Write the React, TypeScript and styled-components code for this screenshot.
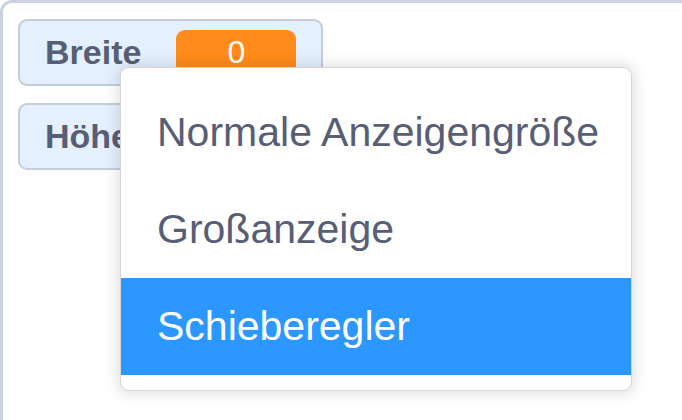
import React from 'react';
import styled, { createGlobalStyle } from 'styled-components';

const GlobalStyle = createGlobalStyle`
  html, body {
    margin: 0;
    padding: 0;
    width: 682px;
    height: 420px;
    overflow: hidden;
    background: #ffffff;
  }
  body {
    font-family: "Liberation Sans", Arial, Helvetica, sans-serif;
  }
`;

const Root = styled.div`
  position: relative;
  width: 682px;
  height: 420px;
  overflow: hidden;
`;

const Stage = styled.div`
  box-sizing: border-box;
  width: 720px;
  height: 460px;
  border: 3px solid #c9d2de;
  border-top-left-radius: 12px;
  background: #ffffff;
  padding: 16px 0 0 15px;
  display: flex;
  flex-direction: column;
  align-items: flex-start;
  gap: 17px;
`;

const Monitor = styled.div`
  box-sizing: border-box;
  height: 67px;
  display: flex;
  align-items: center;
  gap: 35px;
  padding: 0 25px 0 25px;
  background: #e5f0ff;
  border: 2px solid #c4cedb;
  border-radius: 9px;
`;

const Label = styled.span`
  font-size: 34px;
  font-weight: 700;
  color: #575e75;
  white-space: nowrap;
`;

const Value = styled.span`
  box-sizing: border-box;
  min-width: 120px;
  height: 45px;
  display: flex;
  align-items: center;
  justify-content: center;
  background: #ff8c1a;
  border-radius: 9px;
  color: #ffffff;
  font-size: 32px;
`;

const Menu = styled.ul`
  position: absolute;
  left: 120px;
  top: 67px;
  box-sizing: border-box;
  width: 512px;
  margin: 0;
  padding: 16px 0 15px;
  list-style: none;
  background: #ffffff;
  border: 1px solid #d6d6d6;
  border-radius: 9px;
  box-shadow: 0 0 14px 3px rgba(0, 0, 0, 0.12);
`;

const Item = styled.li<{ $active?: boolean }>`
  height: 97px;
  display: flex;
  align-items: center;
  padding-left: 36px;
  font-size: 41px;
  color: ${(p) => (p.$active ? '#ffffff' : '#575e75')};
  background: ${(p) => (p.$active ? '#2b97ff' : 'transparent')};
  white-space: nowrap;
`;

const monitors = [
  { label: 'Breite', value: 0 },
  { label: 'Höhe', value: 0 },
];

const items = ['Normale Anzeigengröße', 'Großanzeige', 'Schieberegler'];

export default function App() {
  return (
    <Root>
      <GlobalStyle />
      <Stage>
        {monitors.map((m) => (
          <Monitor key={m.label}>
            <Label>{m.label}</Label>
            <Value>{m.value}</Value>
          </Monitor>
        ))}
      </Stage>
      <Menu>
        {items.map((text, i) => (
          <Item key={text} $active={i === items.length - 1}>
            {text}
          </Item>
        ))}
      </Menu>
    </Root>
  );
}
